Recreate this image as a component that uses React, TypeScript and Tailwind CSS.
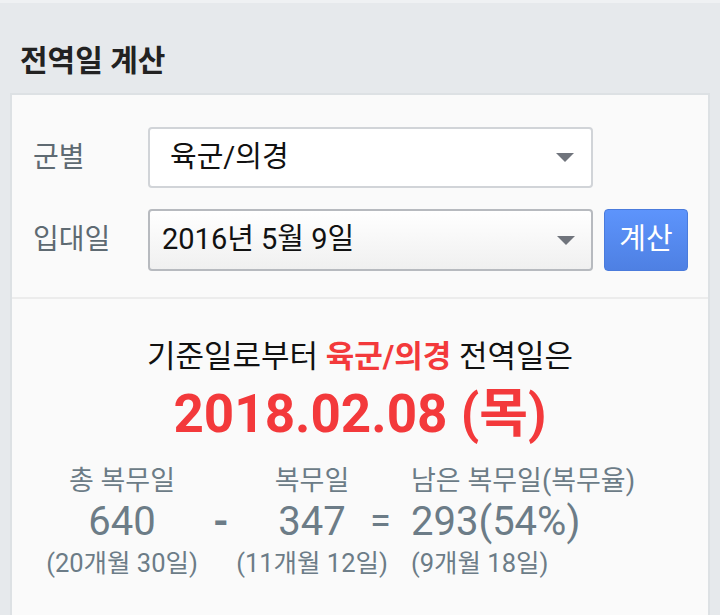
import React from 'react';

const font = { fontFamily: "Roboto, 'Noto Sans CJK KR', 'Noto Sans', sans-serif" };

const Caret: React.FC = () => (
  <svg width="18" height="9" viewBox="0 0 18 9" className="shrink-0">
    <polygon points="0,0 18,0 9,9" fill="#70747c" />
  </svg>
);

const App: React.FC = () => {
  return (
    <div
      className="w-[720px] h-[615px] overflow-hidden bg-[#e6e9ec] border-t-[3px] border-[#eff1f3]"
      style={font}
    >
      {/* Title */}
      <div className="h-[90px] pl-[20px] pt-[38px]">
        <h1 className="text-[30px] leading-[40px] font-bold text-[#222]">전역일 계산</h1>
      </div>

      {/* Card */}
      <div className="mx-[10px] h-[600px] border-2 border-[#dde1e4] bg-[#fafafa]">
        {/* Form */}
        <div className="pt-[32px] pb-[26px] pl-[21px] pr-[20px] space-y-[21px]">
          <div className="flex items-center">
            <label className="w-[115px] text-[28px] leading-[40px] text-[#5e6a72]">군별</label>
            <div className="w-[445px] h-[61px] flex items-center justify-between pl-[20px] pr-[17px] bg-white border-2 border-[#d1d4d8] rounded-[4px]">
              <span className="text-[29px] text-[#111]">육군/의경</span>
              <Caret />
            </div>
          </div>
          <div className="flex items-center">
            <label className="w-[115px] text-[28px] leading-[40px] text-[#5e6a72]">입대일</label>
            <div className="w-[445px] h-[62px] flex items-center justify-between pl-[12px] pr-[16px] bg-gradient-to-b from-white to-[#f0f0f0] border-2 border-[#b7babf] rounded-[4px]">
              <span className="text-[29px] text-[#111]">2016년 5월 9일</span>
              <Caret />
            </div>
            <button className="ml-[11px] w-[84px] h-[62px] rounded-[4px] border border-[#4a7bdc] bg-gradient-to-b from-[#5d94fc] to-[#4e80e3] text-white text-[29px]">
              계산
            </button>
          </div>
        </div>

        <div className="h-[2px] bg-[#ececec]" />

        {/* Result */}
        <div className="pt-[37px] text-center">
          <p className="text-[31px] leading-[42px] text-[#111]">
            기준일로부터 <span className="font-bold text-[#f3393b]">육군/의경</span> 전역일은
          </p>
          <p className="mt-[6px] text-[53px] leading-[60px] font-bold text-[#f3393b]">2018.02.08 (목)</p>
        </div>

        {/* Stats */}
        <div className="mt-[21px] ml-[25px] grid grid-cols-[170px_47px_116px_41px_1fr] text-[#6c7c87] whitespace-nowrap">
          <div className="justify-self-center text-[27px] leading-[32px]">총 복무일</div>
          <div />
          <div className="justify-self-center text-[27px] leading-[32px]">복무일</div>
          <div />
          <div className="justify-self-start text-[27px] leading-[32px]">남은 복무일(복무율)</div>

          <div className="justify-self-center text-[40px] leading-[50px]">640</div>
          <div className="pl-[6px] text-[40px] leading-[50px] font-bold">-</div>
          <div className="justify-self-center text-[40px] leading-[50px]">347</div>
          <div className="text-[38px] leading-[48px]">=</div>
          <div className="justify-self-start text-[40px] leading-[50px]">293(54%)</div>

          <div className="justify-self-center text-[25.5px] leading-[32px]">(20개월 30일)</div>
          <div />
          <div className="justify-self-center text-[25.5px] leading-[32px]">(11개월 12일)</div>
          <div />
          <div className="justify-self-start text-[25.5px] leading-[32px]">(9개월 18일)</div>
        </div>
      </div>
    </div>
  );
};

export default App;
